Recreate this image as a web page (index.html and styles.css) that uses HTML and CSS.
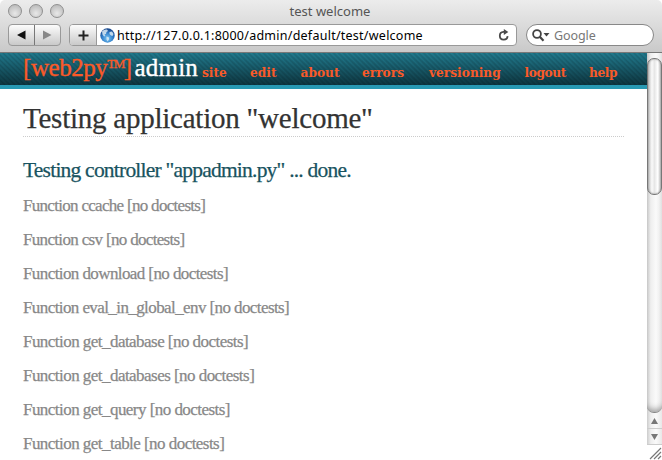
FILE: index.html
```html
<!DOCTYPE html>
<html lang="en">
<head>
<meta charset="utf-8">
<title>test welcome</title>
<link rel="stylesheet" href="styles.css">
</head>
<body>
<div class="window">
  <div class="chrome">
    <div class="titlebar">
      <div class="lights"><i></i><i></i><i></i></div>
      <span class="title">test welcome</span>
    </div>
    <div class="toolbar">
      <div class="nav">
        <span class="nav-btn"><svg width="9" height="10" viewBox="0 0 9 10"><path d="M0 5L8.5 .5V9.5Z" fill="#111"/></svg></span>
        <span class="nav-btn"><svg width="9" height="10" viewBox="0 0 9 10"><path d="M8.5 5L0 .5V9.5Z" fill="#888"/></svg></span>
      </div>
      <div class="address">
        <span class="add"><svg width="11" height="11" viewBox="0 0 11 11"><path d="M5.5 .5V10.500M.5 5.500H10.500" stroke="#222" stroke-width="2"/></svg></span>
        <svg class="globe" width="15" height="15" viewBox="0 0 15 15">
          <defs><radialGradient id="sea" cx=".5" cy=".7" r=".65"><stop offset="0" stop-color="#7cc8f5"/><stop offset=".6" stop-color="#2f7dc8"/><stop offset="1" stop-color="#16468c"/></radialGradient></defs>
          <circle cx="7.500" cy="7.500" r="7.200" fill="url(#sea)"/>
          <path d="M2 3.500Q4 1 7 1.500L8 3 6.500 4 6 6 4.500 6.500 5.500 8 4 8.500 2.500 6.500ZM9.500 4L12 3.500 13.500 6 12.500 8 11 7.500 9.500 6ZM6.500 8.500L9 9.500 9 11.500 7.500 13.500 6.500 11.500Z" fill="#dcebf3" opacity=".85"/>
        </svg>
        <span class="url">http://127.0.0.1:8000/admin/default/test/welcome</span>
        <svg class="reload" width="12" height="13" viewBox="0 0 12 13"><path d="M7 2.900H5.500A3.900 3.900 0 1 0 9.600 7.200" fill="none" stroke="#4a4a4a" stroke-width="1.800"/><path d="M5.800 0L10.300 3 5.800 6Z" fill="#4a4a4a"/></svg>
      </div>
      <div class="search">
        <svg width="18" height="13" viewBox="0 0 18 13"><circle cx="5" cy="5" r="3.900" fill="none" stroke="#444" stroke-width="1.800"/><path d="M7.800 7.800L11.500 11.800" stroke="#444" stroke-width="2.200"/><path d="M11.500 4H17.500L14.500 7.500Z" fill="#444"/></svg>
        <span class="hint">Google</span>
      </div>
    </div>
  </div>
  <div class="viewport">
    <div class="page">
      <header class="header">
        <div class="brand"><span class="logo">[web2py</span><span class="tm">TM</span><span class="logo">]</span><span class="admin">admin</span></div>
        <nav class="menu"><a>site</a><a>edit</a><a>about</a><a>errors</a><a>versioning</a><a class="tight">logout</a><a class="tight">help</a></nav>
      </header>
      <main class="content">
        <h2>Testing application "welcome"</h2>
        <h3>Testing controller "appadmin.py" ... done.</h3>
        <p class="tightest">Function ccache [no doctests]</p>
        <p class="tighter">Function csv [no doctests]</p>
        <p class="tight">Function download [no doctests]</p>
        <p class="tight">Function eval_in_global_env [no doctests]</p>
        <p>Function get_database [no doctests]</p>
        <p>Function get_databases [no doctests]</p>
        <p>Function get_query [no doctests]</p>
        <p>Function get_table [no doctests]</p>
      </main>
    </div>
    <div class="scrollbar">
      <div class="track"><div class="thumb"></div></div>
      <div class="arrows">
        <span><svg width="7" height="6" viewBox="0 0 7 6"><path d="M0 6L3.500 0 7 6Z" fill="#777"/></svg></span>
        <span><svg width="7" height="6" viewBox="0 0 7 6"><path d="M0 0H7L3.500 6Z" fill="#777"/></svg></span>
      </div>
      <svg class="grip" width="15" height="15" viewBox="0 0 15 15"><path d="M3 14L14 3M7 14L14 7M11 14L14 11" stroke="#777" stroke-width="1.200"/></svg>
    </div>
  </div>
</div>
</body>
</html>
```
FILE: styles.css
```css
* { box-sizing: border-box; }
body { margin: 0; background: #fff; font-family: "Liberation Serif", serif; }
.window { width: 662px; height: 460px; overflow: hidden; display: flex; flex-direction: column; }
.chrome { height: 53px; flex: none; background: linear-gradient(#ececec, #c9c9c9); border-bottom: 1px solid #777; border-radius: 5px 5px 0 0; font-family: "Noto Sans", sans-serif; }
.titlebar { height: 24px; display: grid; grid-template-columns: 80px 1fr 82px; align-items: center; text-align: center; }
.title { font-size: 13px; line-height: 20px; margin-bottom: 2px; color: #555; }
.lights { display: flex; gap: 7px; padding-left: 8px; margin-top: -2px; }
.lights i { width: 14px; height: 14px; border: 1px solid #909090; border-radius: 50%; background: radial-gradient(circle at 50% 70%, #e8e8e8, #b2b2b2); }
.toolbar { display: flex; height: 22px; padding-left: 8px; }
.nav { display: flex; width: 53px; border: 1px solid #999; border-radius: 4px; background: linear-gradient(#fcfcfc, #c9c9c9); }
.nav-btn { flex: 1; display: flex; align-items: center; justify-content: center; }
.nav-btn + .nav-btn { border-left: 1px solid #777; }
.address { width: 448px; margin-left: 8px; display: flex; align-items: center; border: 1px solid #999; border-radius: 4px; background: #fff; overflow: hidden; }
.add { width: 27px; height: 20px; display: flex; align-items: center; justify-content: center; border-right: 1px solid #999; background: linear-gradient(#fcfcfc, #c9c9c9); }
.globe { margin: 0 2px 0 3px; }
.url { flex: none; padding-top: 2px; font-size: 12.5px; line-height: 18px; letter-spacing: .25px; color: #000; white-space: nowrap; }
.reload { margin-left: auto; margin-right: 6px; }
.search { width: 128px; margin-left: 9px; display: flex; align-items: center; gap: 4px; padding-left: 5px; border: 1px solid #888; border-radius: 11px; background: #fff; }
.hint { padding-top: 2px; font-size: 12.5px; line-height: 18px; letter-spacing: -.1px; color: #777; }
.viewport { flex: 1; display: flex; min-height: 0; }
.page { width: 647px; overflow: hidden; }
.header { height: 36px; display: flex; align-items: baseline; padding-left: 23px; border-bottom: 4px solid #2899b3; background: repeating-linear-gradient(45deg, rgba(0,0,0,.16) 0, transparent 1.77px, rgba(0,0,0,.16) 3.54px), linear-gradient(#217d91, #0e3741); color: #fa5a28; }
.brand { width: 179px; display: flex; align-items: baseline; font-size: 25px; line-height: 30px; -webkit-text-stroke: .35px; }
.logo { letter-spacing: -.45px; }
.tm { font-size: 13px; line-height: 1; letter-spacing: -1.6px; position: relative; top: -8px; }
.admin { color: #fff; margin-left: 3px; letter-spacing: .2px; }
.menu { display: grid; grid-template-columns: 48px 50.5px 61.5px 67px 95.5px 64.5px 40px; font: bold 12.2px/20px "DejaVu Serif", serif; position: relative; top: 1px; }
.menu .tight { letter-spacing: -.4px; }
.content { padding: 0 23px; -webkit-text-stroke: .25px; }
h2 { margin: 11px 0 0; height: 37px; border-bottom: 1px dotted #ccc; font-size: 29px; line-height: 36px; letter-spacing: -.24px; font-weight: normal; color: #333; }
h3 { margin: 20px 0 0; font-size: 21.5px; line-height: 26px; letter-spacing: -.78px; font-weight: normal; color: #185360; }
p { margin: 0 0 14px; font-size: 17px; line-height: 20px; letter-spacing: -.54px; color: #888; }
h3 + p { margin-top: 13px; }
p.tight { letter-spacing: -.59px; }
p.tighter { letter-spacing: -.67px; }
p.tightest { letter-spacing: -.7px; }
.scrollbar { width: 15px; display: flex; flex-direction: column; background: linear-gradient(90deg, #ccc, #eee 25%, #fafafa 60%, #e8e8e8); }
.track { height: 360px; padding-top: 5px; border-bottom: 1px solid #888; border-radius: 0 0 7px 7px; box-shadow: inset 0 -6px 6px -4px #999; }
.thumb { height: 137px; border: 1px solid #777; border-radius: 7px; background: linear-gradient(90deg, #bbb, #fafafa 30%, #e6e6e6 50%, #fff 75%, #bbb); box-shadow: inset 0 0 2px #888; }
.arrows { height: 32px; }
.arrows span { height: 16px; display: flex; align-items: center; justify-content: center; border-bottom: 1px solid #ccc; }
.grip { background: #fff; }
```
